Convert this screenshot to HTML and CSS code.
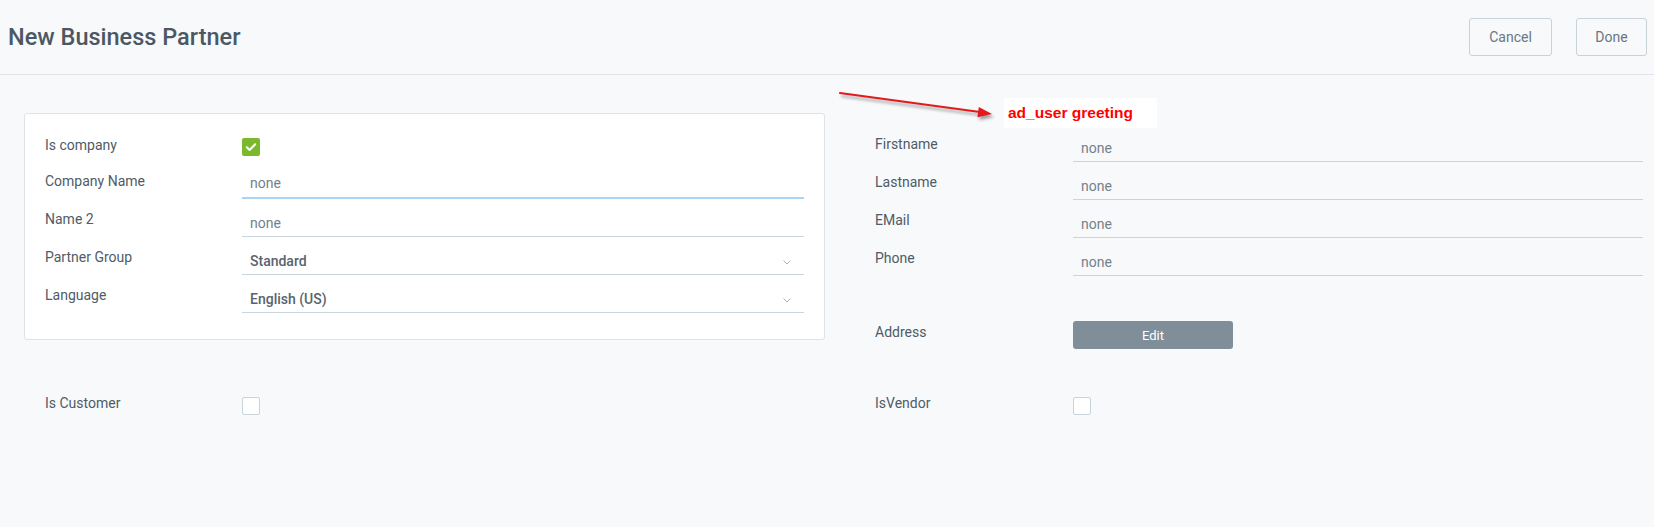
FILE: index.html
```html
<!DOCTYPE html>
<html lang="en">
<head>
<meta charset="utf-8">
<title>New Business Partner</title>
<link rel="stylesheet" href="styles.css">
</head>
<body>
<header class="topbar">
  <h1 class="title">New Business Partner</h1>
  <div class="actions">
    <button class="btn btn-cancel">Cancel</button>
    <button class="btn btn-done">Done</button>
  </div>
</header>

<main class="form">
  <section class="card">
    <div class="row row-check">
      <span class="label">Is company</span>
      <span class="checkbox checked">
        <svg viewBox="0 0 18 18" width="18" height="18"><path d="M4.8 9.2 L7.6 12 L13.2 6.2" fill="none" stroke="#fff" stroke-width="2" stroke-linecap="round" stroke-linejoin="round"/></svg>
      </span>
    </div>
    <div class="row">
      <span class="label">Company Name</span>
      <div class="field focused">none</div>
    </div>
    <div class="row">
      <span class="label">Name 2</span>
      <div class="field">none</div>
    </div>
    <div class="row">
      <span class="label">Partner Group</span>
      <div class="field select"><span class="value">Standard</span><svg class="chevron" viewBox="0 0 8 5" width="8" height="5"><polyline points="0.5,0.5 4,4 7.5,0.5" fill="none" stroke="#a6b6c1" stroke-width="1"/></svg></div>
    </div>
    <div class="row">
      <span class="label">Language</span>
      <div class="field select"><span class="value">English (US)</span><svg class="chevron" viewBox="0 0 8 5" width="8" height="5"><polyline points="0.5,0.5 4,4 7.5,0.5" fill="none" stroke="#a6b6c1" stroke-width="1"/></svg></div>
    </div>
  </section>

  <section class="side">
    <div class="row">
      <span class="label label-wide">Firstname</span>
      <div class="field">none</div>
    </div>
    <div class="row">
      <span class="label label-wide">Lastname</span>
      <div class="field">none</div>
    </div>
    <div class="row">
      <span class="label label-wide">EMail</span>
      <div class="field">none</div>
    </div>
    <div class="row">
      <span class="label label-wide">Phone</span>
      <div class="field">none</div>
    </div>
    <div class="row row-button">
      <span class="label label-wide">Address</span>
      <button class="edit">Edit</button>
    </div>
  </section>

  <div class="row row-bottom cell-left">
    <span class="label">Is Customer</span>
    <span class="checkbox"></span>
  </div>
  <div class="row row-bottom cell-right">
    <span class="label label-wide">IsVendor</span>
    <span class="checkbox"></span>
  </div>
</main>

<svg class="note-arrow" viewBox="0 0 170 36" width="170" height="36">
  <line x1="5" y1="5" x2="145" y2="24" stroke="#e3191c" stroke-width="2" stroke-linecap="round"/>
  <polygon points="157,26 142.4,29.3 143.8,19.1" fill="#e3191c"/>
</svg>
<div class="note-label">ad_user greeting</div>
</body>
</html>
```

FILE: styles.css
```css
html, body {
  margin: 0;
  padding: 0;
}

body {
  background: #f8f9fb;
  font-family: "Roboto", "Noto Sans", sans-serif;
  font-size: 14px;
  color: #4f5b66;
  width: 1654px;
  height: 527px;
  overflow: hidden;
}

.topbar {
  height: 74px;
  border-bottom: 1px solid #e1e4e8;
  display: flex;
  align-items: center;
  justify-content: space-between;
  padding: 0 7px 0 8px;
}

.title {
  margin: 0;
  font-size: 23.5px;
  font-weight: 500;
  color: #4b5863;
  line-height: 30px;
}

.actions {
  display: flex;
  gap: 24px;
  margin-top: -1px;
}

.btn {
  height: 38px;
  border: 1px solid #c7d2d9;
  border-radius: 3px;
  background: #f8f9fb;
  color: #687783;
  font-family: "Roboto", "Noto Sans", sans-serif;
  font-size: 14px;
  padding: 0;
}

.btn-cancel { width: 83px; }
.btn-done { width: 71px; }

.form {
  display: grid;
  grid-template-columns: 801px 788px;
  column-gap: 30px;
  row-gap: 44px;
  padding: 38px 0 0 24px;
  align-items: start;
}

.card {
  background: #fff;
  border: 1px solid #dfe3e7;
  border-radius: 3px;
  padding: 14px 20px 26px 20px;
}

.side {
  padding: 11px 0 0 20px;
}

.row {
  display: flex;
  align-items: flex-end;
  height: 38px;
}

.label {
  width: 197px;
  flex: none;
  line-height: 20px;
  padding-bottom: 8px;
  color: #4f5b66;
}

.label-wide {
  width: 198px;
}

.row-check {
  height: 33px;
  align-items: flex-start;
}

.row-check .label {
  margin-top: 7px;
  padding-bottom: 0;
}

.row-check .checkbox {
  margin-top: 10px;
}

.field {
  flex: 1;
  line-height: 20px;
  padding: 0 8px 3px 8px;
  border-bottom: 1px solid #c9d5dc;
  color: #73818c;
}

.field.focused {
  border-bottom: 2px solid #a9d5f2;
  padding-bottom: 4px;
}

.field.select {
  display: flex;
  align-items: center;
  justify-content: space-between;
}

.value {
  font-weight: 500;
  color: #58646e;
}

.chevron {
  margin-right: 5px;
  margin-top: 2px;
}

.checkbox {
  width: 18px;
  height: 18px;
  box-sizing: border-box;
  border: 1px solid #c9d4db;
  border-radius: 2px;
  background: #fff;
  display: inline-block;
  flex: none;
}

.checkbox.checked {
  border: none;
  background: #7ab82c;
}

.checkbox svg {
  display: block;
}

.row-button {
  height: 28px;
  margin-top: 45px;
  align-items: flex-start;
}

.row-button .label {
  margin-top: 1px;
  padding-bottom: 0;
}

.edit {
  width: 160px;
  height: 28px;
  border: none;
  border-radius: 3px;
  background: #7f8e98;
  color: #fff;
  font-family: "Roboto", "Noto Sans", sans-serif;
  font-size: 13px;
  font-weight: 400;
  padding: 0;
}

.row-bottom {
  height: 36px;
  align-items: flex-start;
}

.row-bottom .label {
  padding-bottom: 0;
}

.row-bottom .checkbox {
  margin-top: 4px;
}

.cell-left {
  padding-left: 21px;
}

.cell-right {
  padding-left: 20px;
}

.note-arrow {
  position: absolute;
  left: 835px;
  top: 88px;
  overflow: visible;
  filter: drop-shadow(2px 3px 1.5px rgba(0, 0, 0, 0.35));
}

.note-label {
  position: absolute;
  left: 1004px;
  top: 98px;
  width: 153px;
  height: 30px;
  padding: 1px 0 0 4px;
  box-sizing: border-box;
  background: #fff;
  color: #ff0000;
  font-family: "Liberation Sans", Arial, sans-serif;
  font-weight: bold;
  font-size: 15.5px;
  line-height: 28px;
}
```
